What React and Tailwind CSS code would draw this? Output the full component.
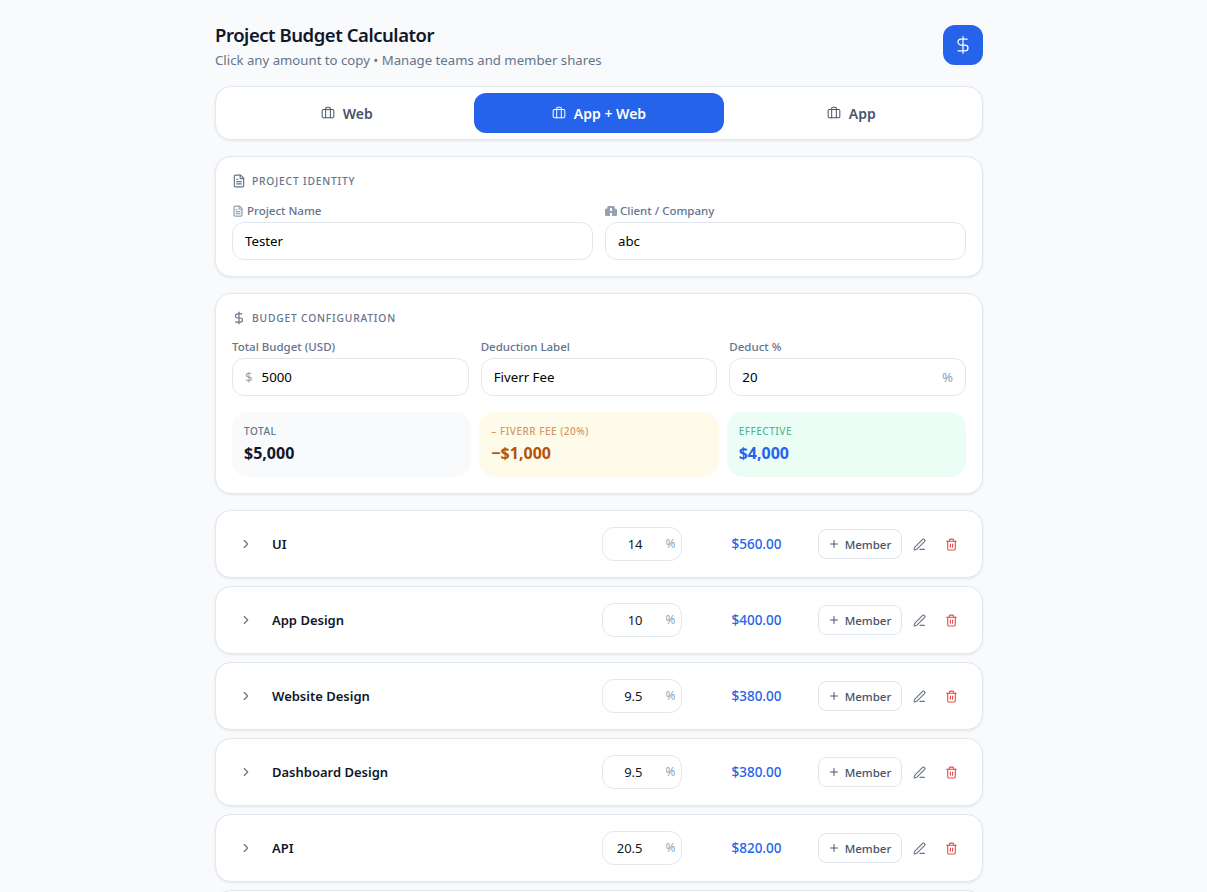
import { Briefcase, ChevronRight, DollarSign, FileText, PenLine, Plus, Trash2 } from 'lucide-react'

const tabs = ['Web', 'App + Web', 'App']

const teams = [
  { name: 'UI', pct: '14', amount: '$560.00' },
  { name: 'App Design', pct: '10', amount: '$400.00' },
  { name: 'Website Design', pct: '9.5', amount: '$380.00' },
  { name: 'Dashboard Design', pct: '9.5', amount: '$380.00' },
  { name: 'API', pct: '20.5', amount: '$820.00' },
  { name: 'Testing', pct: '5', amount: '$200.00' },
]

function Card({ className, children }) {
  return (
    <div className={`rounded-2xl border border-[#e2e8f0] bg-white shadow-[0_1px_3px_rgba(15,23,42,0.08)] ${className}`}>
      {children}
    </div>
  )
}

function SectionTitle({ icon, children }) {
  return (
    <div className="flex h-4 items-center gap-[6px] text-[10.25px] font-medium uppercase tracking-[0.08em] text-[#64748b]">
      {icon}
      <span className="pt-[2px]">{children}</span>
    </div>
  )
}

function Field({ label, icon, value, prefix, suffix }) {
  return (
    <div className="min-w-0 flex-1">
      <label className="flex h-[16px] items-center gap-[3px] text-[11.5px] font-medium leading-4 text-[#64748b]">
        {icon}
        {label}
      </label>
      <div className="mt-[3px] flex h-[38px] items-center rounded-xl border border-[#e2e8f0] bg-white px-3 pt-[2px] text-[13.25px] text-black">
        {prefix && <span className="mr-[9px] text-[#94a3b8]">{prefix}</span>}
        <span className="flex-1">{value}</span>
        {suffix && <span className="text-[#94a3b8]">{suffix}</span>}
      </div>
    </div>
  )
}

function Stat({ label, value, box, labelColor, valueColor }) {
  return (
    <div className={`h-[65px] flex-1 rounded-2xl px-3 pt-[13px] ${box}`}>
      <div className={`text-[10px] font-medium uppercase leading-3 tracking-[0.05em] ${labelColor}`}>{label}</div>
      <div className={`mt-[4px] text-[16px] font-bold leading-6 ${valueColor}`}>{value}</div>
    </div>
  )
}

function TeamRow({ team }) {
  return (
    <Card className="flex h-[68px] shrink-0 items-center pl-[23px] pr-[24.5px]">
      <ChevronRight size={14} className="text-[#64748b]" />
      <div className="ml-[19px] flex-1 pt-[2px] text-[13px] font-semibold text-[#0f172a]">{team.name}</div>
      <div className="flex h-[34px] w-[80px] items-center rounded-xl border border-[#e2e8f0] pr-[5px] text-[13px] leading-5 text-[#0f172a]">
        <span className="flex-1 pr-[23px] text-right">{team.pct}</span>
        <span className="w-[10px] text-[12px] text-[#94a3b8]">%</span>
      </div>
      <div className="w-[136px] pl-[14px] text-center text-[13.5px] font-medium leading-5 text-[#2563eb]">{team.amount}</div>
      <button className="flex h-[30px] w-[84px] items-center justify-center gap-[5px] rounded-lg border border-[#e2e8f0] pt-[2px] text-[11.5px] font-medium leading-5 text-[#475569]">
        <Plus size={12} className="-mt-[2px]" />
        Member
      </button>
      <PenLine size={13} className="ml-[11px] text-[#64748b]" />
      <Trash2 size={13} className="ml-[19px] text-[#ef4444]" />
    </Card>
  )
}

function BuildingGlyph() {
  return (
    <svg width="12" height="10" viewBox="0 0 12 10" className="text-[#94a3b8]">
      <path d="M3 0h6l1.5 3H12v6a1 1 0 0 1-1 1H1a1 1 0 0 1-1-1V3h1.5z" fill="currentColor" />
      <path d="M5 2h2v3H5zM5 7h2v3H5z" fill="#fff" />
    </svg>
  )
}

export default function App() {
  return (
    <div className="flex h-screen justify-center overflow-hidden bg-[#f8fafc] pr-[9px] font-['Noto_Sans',sans-serif]">
      <div className="flex w-[768px] flex-col pt-6">
        <header className="flex items-start justify-between">
          <div>
            <h1 className="text-[18.5px] font-semibold leading-[22px] tracking-[-0.45px] text-[#0f172a]">Project Budget Calculator</h1>
            <p className="mt-[4px] text-[13.2px] leading-5 text-[#64748b]">Click any amount to copy • Manage teams and member shares</p>
          </div>
          <div className="mt-px flex h-10 w-10 items-center justify-center rounded-xl bg-[#2563eb] text-white">
            <DollarSign size={20} strokeWidth={1.5} />
          </div>
        </header>

        <Card className="mt-[16px] flex h-[54px] shrink-0 items-center gap-[3px] px-1.5">
          {tabs.map((t) => (
            <div
              key={t}
              className={`flex h-10 flex-1 items-center justify-center gap-2 rounded-xl text-[14px] font-semibold ${
                t === 'App + Web' ? 'bg-[#2563eb] text-white' : 'text-[#475569]'
              }`}
            >
              <Briefcase size={14} strokeWidth={1.75} />
              {t}
            </div>
          ))}
        </Card>

        <Card className="mt-4 h-[121px] shrink-0 px-4 pt-4">
          <SectionTitle icon={<FileText size={14} />}>Project Identity</SectionTitle>
          <div className="mt-[14px] flex gap-3">
            <Field label="Project Name" value="Tester" icon={<FileText size={12} strokeWidth={2.5} className="text-[#94a3b8]" />} />
            <Field label="Client / Company" value="abc" icon={<BuildingGlyph />} />
          </div>
        </Card>

        <Card className="mt-4 h-[201px] shrink-0 px-4 pt-4">
          <SectionTitle icon={<DollarSign size={14} />}>Budget Configuration</SectionTitle>
          <div className="mt-[13px] flex gap-3">
            <Field label="Total Budget (USD)" value="5000" prefix="$" />
            <Field label="Deduction Label" value="Fiverr Fee" />
            <Field label="Deduct %" value="20" suffix="%" />
          </div>
          <div className="mt-4 flex gap-2">
            <Stat label="Total" value="$5,000" box="bg-[#f8fafc]" labelColor="text-[#64748b]" valueColor="text-[#0f172a]" />
            <Stat label="– Fiverr Fee (20%)" value="−$1,000" box="bg-[#fffbeb]" labelColor="text-[#d4975f]" valueColor="text-[#b45309]" />
            <Stat label="Effective" value="$4,000" box="bg-[#ecfdf5]" labelColor="text-[#059669]/70" valueColor="text-[#2563eb]" />
          </div>
        </Card>

        <div className="mt-4 flex flex-col gap-2">
          {teams.map((team) => (
            <TeamRow key={team.name} team={team} />
          ))}
        </div>
      </div>
    </div>
  )
}
